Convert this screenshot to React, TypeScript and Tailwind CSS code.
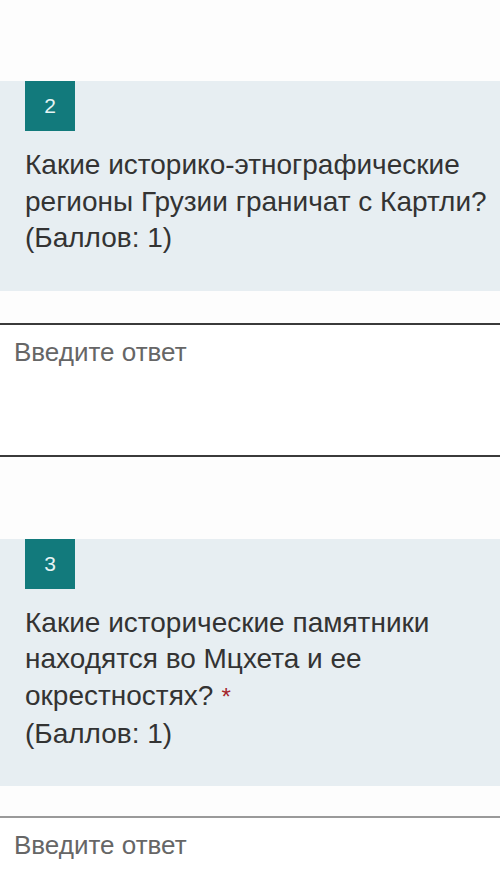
import React from "react";

function Question({ n, lines, required }: { n: number; lines: string[]; required?: boolean }) {
  return (
    <div className="bg-[#e7eef2] pl-[25px] pb-[34px]">
      <div className="w-[50px] h-[50px] bg-[#127a7c] text-[#e6f4f4] text-[21px] flex items-center justify-center">
        {n}
      </div>
      <div className="mt-[16px] text-[28px] leading-[36.6px] text-[#333] whitespace-nowrap">
        {lines.map((l, i) => (
          <div key={i}>
            {l}
            {required && i === lines.length - 1 ? <span className="text-[#a4262c] ml-[8px] text-[24px]">*</span> : null}
          </div>
        ))}
        <div>(Баллов: 1)</div>
      </div>
    </div>
  );
}

export default function App() {
  return (
    <div className="w-[500px] h-[873px] overflow-hidden bg-[#fdfdfd]" style={{ fontFamily: '"Liberation Sans", Arial, sans-serif' }}>
      <div className="h-[81px]" />
      <Question n={2} lines={["Какие историко-этнографические", "регионы Грузии граничат с Картли?"]} />
      <div className="h-[32px]" />
      <div className="border-t-2 border-b-2 border-[#3a3a3a] h-[134px] bg-white px-[14px] pt-[11px]">
        <div className="text-[26px] leading-[32px] text-[#666]">Введите ответ</div>
      </div>
      <div className="h-[82px]" />
      <Question n={3} lines={["Какие исторические памятники", "находятся во Мцхета и ее", "окрестностях?"]} required />
      <div className="h-[30px]" />
      <div className="border-t-2 border-[#9a9a9a] h-[134px] bg-white px-[14px] pt-[11px]">
        <div className="text-[26px] leading-[32px] text-[#666]">Введите ответ</div>
      </div>
    </div>
  );
}
